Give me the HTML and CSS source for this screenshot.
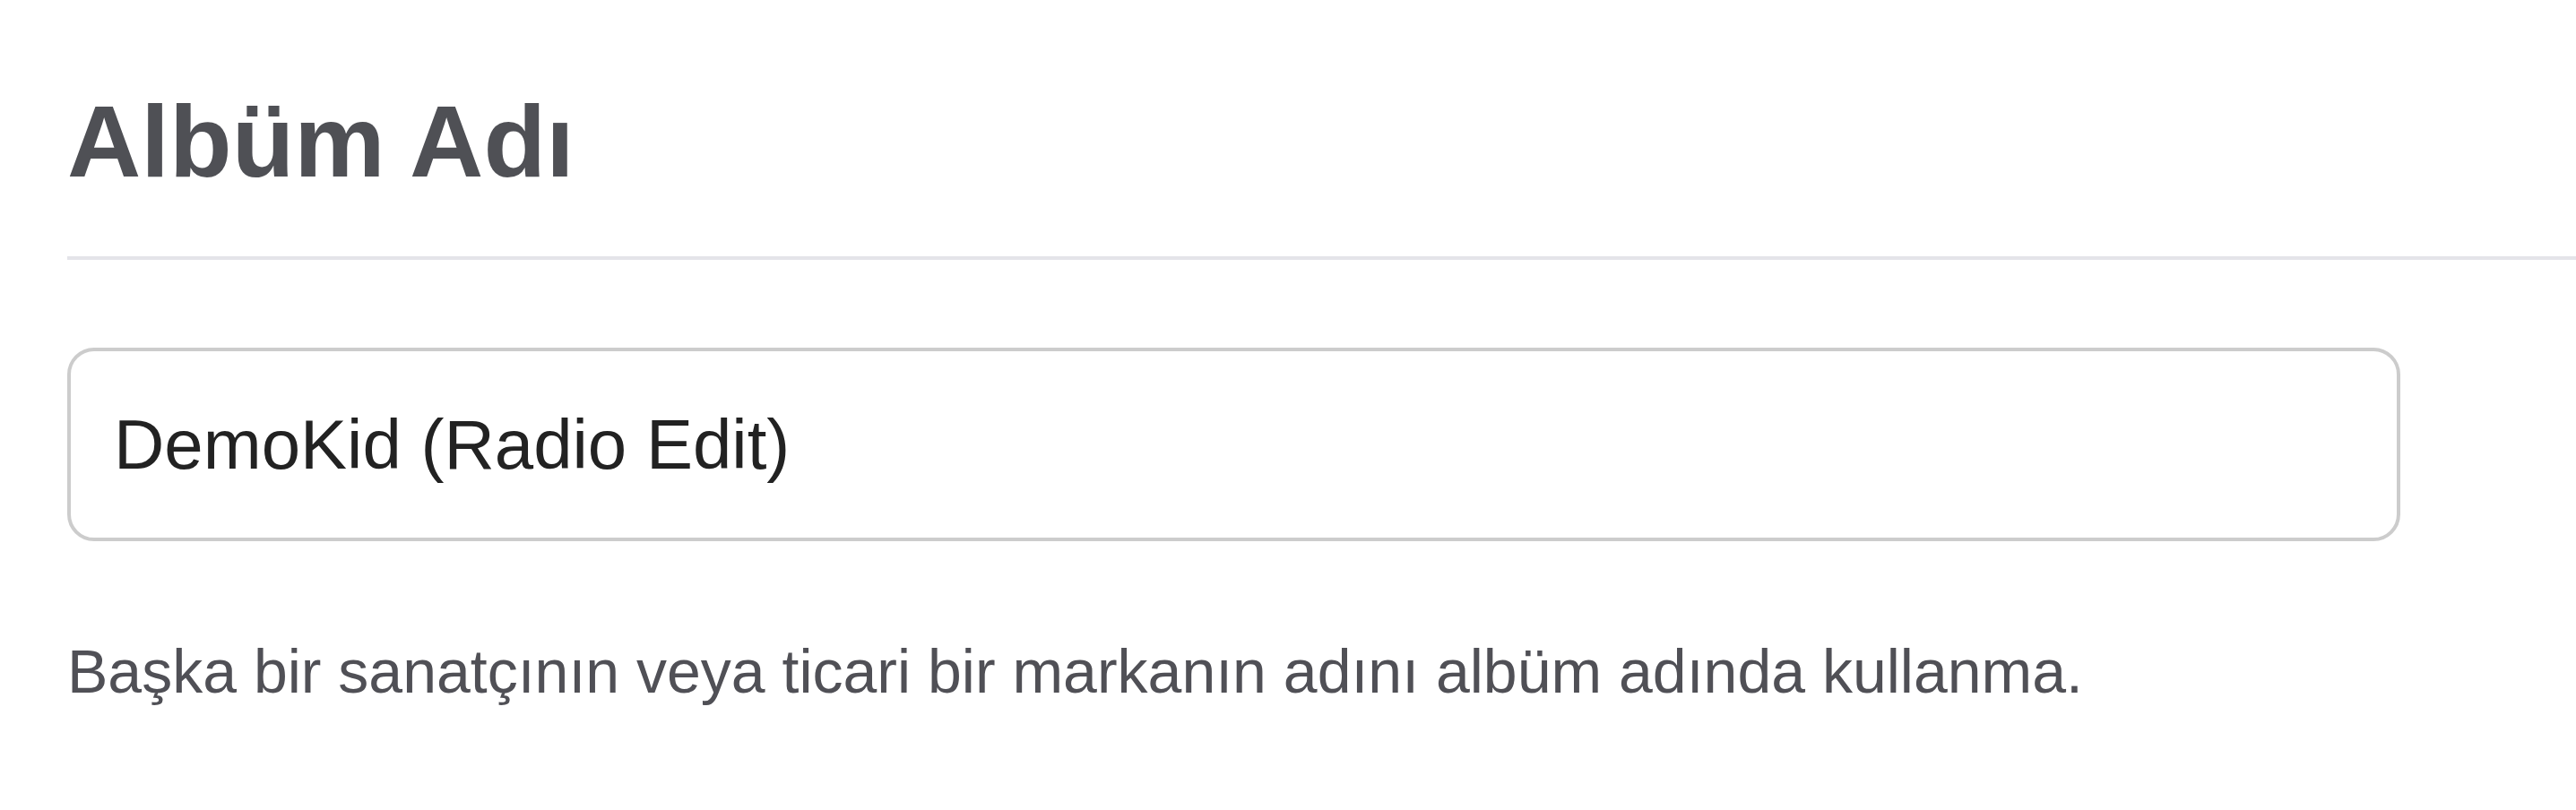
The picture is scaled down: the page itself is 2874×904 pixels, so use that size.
FILE: index.html
```html
<!DOCTYPE html>
<html lang="tr">
<head>
  <meta charset="UTF-8" />
  <meta name="viewport" content="width=device-width, initial-scale=1.0"/>
  <title>Albüm Adı</title>
  <link rel="stylesheet" href="styles.css">
</head>
<body>
  <div class="album-section">
    <h1 class="section-title">Albüm Adı</h1>
    <div class="divider"></div>

    <div class="field">
      <input type="text" id="albumName" name="albumName" class="text-input" value="DemoKid (Radio Edit)" />
      <p class="field-hint">Başka bir sanatçının veya ticari bir markanın adını albüm adında kullanma.</p>
    </div>
  </div>
</body>
</html>
```

FILE: styles.css
```css
body {
  margin: 0;
  background: #fff;
  font-family: "Liberation Sans", Arial, Helvetica, sans-serif;
}

.album-section {
  padding-top: 100px;
  padding-left: 75px;
}

.section-title {
  margin: 0;
  font-size: 114px;
  line-height: 115px;
  font-weight: bold;
  color: #4f5055;
}

.divider {
  height: 4px;
  margin-top: 71px;
  background: #e4e4e9;
}

.field {
  max-width: 2603px;
  margin-top: 98px;
}

.text-input {
  display: block;
  width: 100%;
  height: 216px;
  box-sizing: border-box;
  padding: 0 48px;
  border: 4px solid #cccccc;
  border-radius: 30px;
  background: #fff;
  color: #222;
  font-family: "Liberation Sans", Arial, Helvetica, sans-serif;
  font-size: 78px;
  outline: none;
}

.field-hint {
  margin: 105px 0 0;
  font-size: 68px;
  line-height: 1.2;
  color: #505056;
}
```
